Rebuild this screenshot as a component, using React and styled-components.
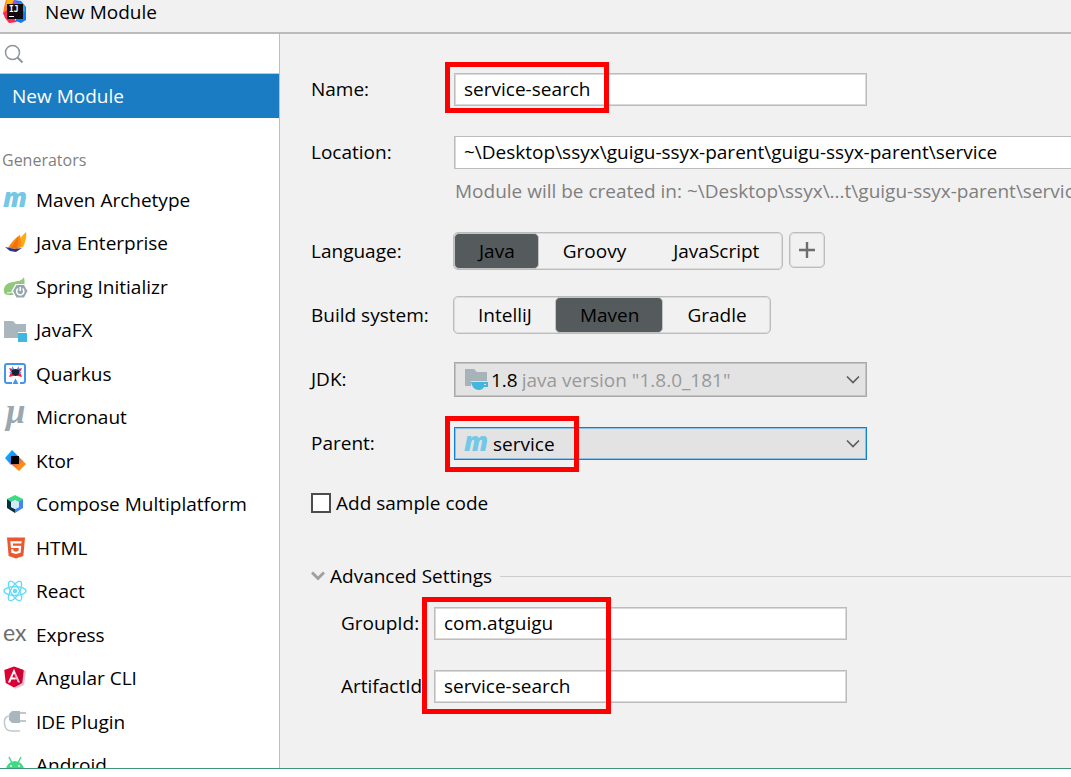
import React, { useState } from 'react';
import styled, { createGlobalStyle } from 'styled-components';
import { FaAngular, FaHtml5 } from 'react-icons/fa';

const GlobalStyle = createGlobalStyle`
  * {
    box-sizing: border-box;
  }

  body {
    margin: 0;
    background: #ffffff;
    color: #000000;
    font-family: 'Open Sans', 'Noto Sans', sans-serif;
    font-size: 19px;
    line-height: 24px;
  }

  button,
  input,
  select {
    margin: 0;
    font: inherit;
    color: inherit;
  }
`;

const Screen = styled.div`
  height: 100vh;
  padding-bottom: 8px;
`;

const Window = styled.div`
  display: flex;
  flex-direction: column;
  height: 100%;
  overflow: hidden;
  background: #f1f1f1;
  border-bottom: 1px solid #3f9577;
`;

const TitleBar = styled.header`
  display: flex;
  flex: none;
  align-items: flex-start;
  gap: 19px;
  height: 34px;
  padding-left: 2px;
  border-bottom: 2px solid #bcbcbc;
`;

const Title = styled.h1`
  margin: 0;
  font-size: 19px;
  font-weight: 400;
  line-height: 24px;
`;

const Body = styled.div`
  display: flex;
  flex: 1;
  min-height: 0;
`;

const Sidebar = styled.aside`
  flex: 0 0 280px;
  overflow: hidden;
  background: #ffffff;
  border-right: 1px solid #bfbfbf;
`;

const SearchBox = styled.label`
  display: flex;
  align-items: center;
  gap: 8px;
  height: 40px;
  padding: 0 4px;
  border-bottom: 1px solid #c6c6c6;
`;

const SearchInput = styled.input`
  flex: 1;
  min-width: 0;
  padding: 0;
  border: 0;
  outline: 0;
  background: transparent;
`;

const ModuleButton = styled.button`
  display: block;
  width: 100%;
  height: 44px;
  padding: 0 12px;
  border: 0;
  background: #1a7dc4;
  color: #ffffff;
  text-align: left;
`;

const SectionTitle = styled.h2`
  margin: 30px 0 6px;
  padding-left: 2px;
  color: #7f7f7f;
  font-size: 16px;
  font-weight: 400;
  line-height: 24px;
`;

const GeneratorList = styled.ul`
  margin: 0;
  padding: 0;
  list-style: none;
`;

const GeneratorItem = styled.li`
  height: 43px;

  &:nth-child(even) {
    height: 44px;
  }
`;

const GeneratorButton = styled.button`
  display: flex;
  align-items: center;
  gap: 9px;
  width: 100%;
  height: 100%;
  padding: 0 3px;
  border: 0;
  background: transparent;
  text-align: left;
`;

const IconBox = styled.span`
  display: flex;
  flex: none;
  width: 24px;
  height: 24px;

  svg {
    display: block;
    width: 24px;
    height: 24px;
    overflow: visible;
  }
`;

const Form = styled.form`
  flex: 1;
  min-width: 0;
  padding: 39px 0 0 31px;
  overflow: hidden;
`;

const Row = styled.div`
  display: flex;
  align-items: center;
  margin-top: ${({ $gap }) => $gap || 0}px;
`;

const Label = styled.label`
  flex: 0 0 ${({ $width }) => $width || 143}px;
  padding-bottom: 1px;
  white-space: nowrap;
`;

const Field = styled.div`
  position: relative;
  flex: 1;
  min-width: 0;
  max-width: ${({ $wide }) => ($wide ? 'none' : '413px')};
`;

const TextInput = styled.input`
  display: block;
  width: 100%;
  height: 33px;
  padding: 0 9px 1px;
  border: 1px solid #bdbdbd;
  border-right-width: ${({ $open }) => ($open ? 0 : '1px')};
  border-radius: 0;
  outline: 0;
  background: #ffffff;
  box-shadow: inset ${({ $open }) => ($open ? '1px' : 0)} 0 0 ${({ $open }) => ($open ? 0 : '1px')} #d9d9d9;
`;

const Hint = styled.p`
  margin: 10px 0 0 144px;
  overflow: hidden;
  color: #7f7f7f;
  white-space: nowrap;
`;

const Segments = styled.div`
  display: flex;
  height: 38px;
  border: 1px solid #bcbcbc;
  border-radius: 5px;
  box-shadow: inset 0 0 0 1px #dcdcdc;
`;

const Segment = styled.button`
  padding: 0 23px 0 24px;
  border: ${({ $active }) => ($active ? '1px solid #c4c4c4' : 0)};
  border-radius: 5px;
  background: ${({ $active }) => ($active ? '#555a5c' : 'transparent')};
`;

const AddButton = styled.button`
  display: flex;
  align-items: center;
  justify-content: center;
  width: 36px;
  height: 36px;
  margin: 0 0 2px 6px;
  padding: 0;
  border: 1px solid #bcbcbc;
  border-radius: 5px;
  background: transparent;
  box-shadow: inset 0 0 0 1px #dcdcdc;
`;

const Combo = styled.div`
  display: flex;
  align-items: center;
  height: ${({ $focused }) => ($focused ? 33 : 35)}px;
  padding: 0 6px 0 9px;
  border: 1px solid ${({ $focused }) => ($focused ? '#0f80d8' : '#a9a9a9')};
  background: #e3e3e3;
  box-shadow: inset 0 0 0 1px ${({ $focused }) => ($focused ? '#8fc0e6' : '#c2c2c2')};
`;

const ComboPrefix = styled.span`
  margin: 0 4px 0 3px;
`;

const Select = styled.select`
  flex: 1;
  min-width: 0;
  padding: 0;
  border: 0;
  outline: 0;
  appearance: none;
  background: transparent;
  color: ${({ $muted }) => ($muted ? '#999999' : '#000000')};
  margin-left: ${({ $muted }) => ($muted ? 0 : '5px')};
`;

const Highlight = styled.div`
  position: absolute;
  top: ${({ $top }) => $top}px;
  left: ${({ $left }) => $left}px;
  width: ${({ $width }) => $width}px;
  height: ${({ $height }) => $height}px;
  border: 5px solid #ff0000;
  pointer-events: none;
`;

const CheckLabel = styled.label`
  display: flex;
  align-items: center;
  gap: 5px;
`;

const Checkbox = styled.input`
  width: 20px;
  height: 20px;
  appearance: none;
  border: 2px solid #4d4d4d;
  background: #ffffff;

  &:checked {
    background: #1a7dc4;
  }
`;

const AdvancedToggle = styled.button`
  display: flex;
  align-items: center;
  gap: 5px;
  width: 100%;
  margin-top: 49px;
  padding: 0;
  border: 0;
  background: transparent;

  &::after {
    content: '';
    flex: 1;
    height: 1px;
    margin-left: 3px;
    background: #cccccc;
  }
`;

const AdvancedPanel = styled.div`
  position: relative;
  padding: 19px 0 0 30px;
`;

const MavenIcon = () => (
  <svg viewBox="0 0 24 24" aria-hidden="true">
    <text x="0" y="19" fontFamily="Open Sans, sans-serif" fontSize="26" fontWeight="800" fontStyle="italic" fill="#72c8e6">m</text>
  </svg>
);

const JavaEnterpriseIcon = () => (
  <svg viewBox="0 0 24 24" aria-hidden="true">
    <path d="M23 1C18 5 14 12 13 18l7-2c2-4 4-10 3-15z" fill="#fcac10" />
    <path d="M17 4C12 7 8 12 5 17l9 1 4-3c0-4 0-8-1-11z" fill="#f78b15" />
    <path d="M15 6L8 17l6 1c1-4 1-8 1-12z" fill="#f86f09" />
    <path d="M2 16l10 2 7-1-6 4-6-1z" fill="#27348b" />
  </svg>
);

const SpringIcon = () => (
  <svg viewBox="0 0 24 24" aria-hidden="true">
    <path d="M21 2c-2 4-6 4-11 5-7 1-10 5-9 10 1 3 3 3 5 3h8c6 0 9-9 7-18z" fill="#8fc97a" />
    <path d="M4 18c5 0 9-3 12-7" stroke="#ffffff" fill="none" />
    <path d="M12.500 9h9l4 7-4 7.500h-9L8.500 16z" fill="#ffffff" />
    <path d="M13.500 10h7.500l3.500 6-3.500 6.500h-7.500L10 16z" fill="#98a6af" />
    <path d="M15 13.500a3.600 3.600 0 1 0 4.500 0M17.200 12v4" stroke="#ffffff" strokeWidth="1.500" fill="none" />
  </svg>
);

const JavaFxIcon = () => (
  <svg viewBox="0 0 24 24" aria-hidden="true">
    <path d="M1 3h9l3 3h10v8h-8v6H1z" fill="#aab6bd" />
    <path d="M15 15h9v9h-9z" fill="#40b6e0" />
  </svg>
);

const QuarkusIcon = () => (
  <svg viewBox="0 0 24 24" aria-hidden="true">
    <path d="M9 21H4a2 2 0 0 1-2-2V4a2 2 0 0 1 2-2h16a2 2 0 0 1 2 2v15a2 2 0 0 1-2 2h-3" fill="none" stroke="#4695eb" strokeWidth="2" />
    <path d="M12.500 16.500l3 5.500h-6z" fill="#4695eb" />
    <path d="M6 6l4 1h5l4-1-2 4 2 5-4-1h-5l-4 1 2-5z" fill="#f5174f" />
    <path d="M9 4l3 4-3 2zM16 4l-3 4 3 2zM6 10l3 0 0 2zM19 10l-3 0 0 2z" fill="#4695eb" />
    <path d="M9 8l3.500-1L16 8v4l-3.500 2L9 12z" fill="#16222c" />
  </svg>
);

const MicronautIcon = () => (
  <svg viewBox="0 0 24 24" aria-hidden="true">
    <text x="3" y="18" fontFamily="Liberation Serif, serif" fontSize="35" fontWeight="700" fontStyle="italic" fill="#9aa7b0">μ</text>
  </svg>
);

const KtorIcon = () => (
  <svg viewBox="0 0 24 24" aria-hidden="true">
    <defs>
      <linearGradient id="ktorBlue" x1="0" y1="0" x2="1" y2="1">
        <stop offset="0.300" stopColor="#08a8ff" />
        <stop offset="1" stopColor="#7b4fd8" />
      </linearGradient>
      <linearGradient id="ktorOrange" x1="0" y1="0" x2="1" y2="1">
        <stop offset="0" stopColor="#8f3fc4" />
        <stop offset="0.600" stopColor="#ff8a14" />
      </linearGradient>
    </defs>
    <path d="M9 1l7 7-8 8-6-7z" fill="url(#ktorBlue)" />
    <path d="M16 8l7 7-7 7-8-7z" fill="url(#ktorOrange)" />
    <path d="M8 7h8v8H8z" fill="#000000" />
  </svg>
);

const ComposeIcon = () => (
  <svg viewBox="0 0 24 24" aria-hidden="true">
    <path d="M12 3l8 4-4 4-4-3-4 3-4-4z" fill="#3ddc84" />
    <path d="M4 7l4 3v5l4 2v4l-8-5z" fill="#073042" />
    <path d="M20 7v9l-8 5v-4l4-2v-5z" fill="#4285f4" />
    <path d="M12 8l4 2v5l-4 2-4-2v-5z" fill="#d4ebf5" />
  </svg>
);

const HtmlIcon = () => (
  <svg viewBox="0 0 24 24" aria-hidden="true">
    <FaHtml5 x="1" y="0" width="22" height="22" color="#e9582e" />
  </svg>
);

const ReactIcon = () => (
  <svg viewBox="0 0 24 24" aria-hidden="true">
    <g fill="none" stroke="#61dafb" strokeWidth="1.300">
      <ellipse cx="12" cy="12" rx="11" ry="4.300" />
      <ellipse cx="12" cy="12" rx="11" ry="4.300" transform="rotate(60 12 12)" />
      <ellipse cx="12" cy="12" rx="11" ry="4.300" transform="rotate(120 12 12)" />
    </g>
    <circle cx="12" cy="12" r="2.200" fill="#61dafb" />
  </svg>
);

const ExpressIcon = () => (
  <svg viewBox="0 0 24 24" aria-hidden="true">
    <text x="0" y="18" fontFamily="Lato, sans-serif" fontSize="23" fill="#6e6e6e">ex</text>
  </svg>
);

const AngularIcon = () => (
  <svg viewBox="0 0 24 24" aria-hidden="true">
    <FaAngular x="-1" y="-1" width="26" height="26" color="#dd0031" />
    <path d="M12 1l11 4-2 14-9 4z" fill="#a00040" opacity="0.250" />
  </svg>
);

const PluginIcon = () => (
  <svg viewBox="0 0 24 24" aria-hidden="true">
    <path d="M9 1h8v12H9l-3-3V4z" fill="#aab6bd" />
    <path d="M17 3h6M17 11h6" stroke="#aab6bd" strokeWidth="1.600" />
    <path d="M7 6C2 6 1 9 1.500 14c.5 5 4 7 7.500 7h8" fill="none" stroke="#c0c9ce" strokeWidth="1.600" />
  </svg>
);

const AndroidIcon = () => (
  <svg viewBox="0 0 24 24" aria-hidden="true">
    <path d="M3 17a9 9 0 0 1 18 0z" fill="#3ddc84" />
    <path d="M6 4l3 6M18 4l-3 6" stroke="#3ddc84" strokeWidth="1.500" />
    <circle cx="8" cy="13" r="1" fill="#ffffff" />
    <circle cx="16" cy="13" r="1" fill="#ffffff" />
  </svg>
);

const JdkIcon = () => (
  <svg viewBox="0 0 24 24" aria-hidden="true">
    <path d="M1 1h9l3 3h10v9H7v5H1z" fill="#a8b2b9" />
    <path d="M7 14h17v5h-4c-1 2-3 3-5 3-4 0-7-3-8-8z" fill="#40b6e0" />
    <path d="M20 16h2v1h-2z" fill="#e3e3e3" />
  </svg>
);

const IdeaLogo = () => (
  <svg viewBox="0 0 24 24" aria-hidden="true">
    <path d="M4 0h8v22l-5 1-2-7-4-2 1-7z" fill="#fc801d" />
    <path d="M1 13l4-3 10 12-8 1-4-5z" fill="#fe2857" />
    <path d="M5 0h8l-7 8-2-3z" fill="#fdb60d" />
    <path d="M12 0l7 1 5 6v13l-5 3-5-2V5z" fill="#087cfa" />
    <path d="M17 2l6 4v6l-5-2z" fill="#21a8f5" />
    <path d="M12 0l5 4-8 2z" fill="#a74de0" />
    <path d="M5 4h16v15H5z" fill="#120a0c" />
    <text x="7" y="12" fontFamily="DejaVu Sans Mono, monospace" fontSize="8" fontWeight="700" fill="#ffffff">IJ</text>
    <path d="M7 16h5v1H7z" fill="#ffffff" />
  </svg>
);

const SearchIcon = () => (
  <svg width="20" height="20" viewBox="0 0 20 20" fill="none" stroke="#8b959c" aria-hidden="true">
    <circle cx="8.500" cy="8.500" r="7" strokeWidth="1.500" />
    <path d="M13.500 13.500l5 5" strokeWidth="2" />
  </svg>
);

const ChevronIcon = () => (
  <svg width="14" height="10" viewBox="0 0 14 10" fill="none" stroke="#5e5e5e" strokeWidth="1.700" aria-hidden="true">
    <path d="M1 1.500l6 6 6-6" />
  </svg>
);

const generators = [
  { name: 'Maven Archetype', Icon: MavenIcon },
  { name: 'Java Enterprise', Icon: JavaEnterpriseIcon },
  { name: 'Spring Initializr', Icon: SpringIcon },
  { name: 'JavaFX', Icon: JavaFxIcon },
  { name: 'Quarkus', Icon: QuarkusIcon },
  { name: 'Micronaut', Icon: MicronautIcon },
  { name: 'Ktor', Icon: KtorIcon },
  { name: 'Compose Multiplatform', Icon: ComposeIcon },
  { name: 'HTML', Icon: HtmlIcon },
  { name: 'React', Icon: ReactIcon },
  { name: 'Express', Icon: ExpressIcon },
  { name: 'Angular CLI', Icon: AngularIcon },
  { name: 'IDE Plugin', Icon: PluginIcon },
  { name: 'Android', Icon: AndroidIcon },
];

const SegmentedControl = ({ id, options, value, onChange }) => (
  <Segments role="group" aria-labelledby={id}>
    {options.map((option) => (
      <Segment
        key={option}
        type="button"
        $active={option === value}
        aria-pressed={option === value}
        onClick={() => onChange(option)}
      >
        {option}
      </Segment>
    ))}
  </Segments>
);

const App = () => {
  const [language, setLanguage] = useState('Java');
  const [buildSystem, setBuildSystem] = useState('Maven');
  const [advancedOpen, setAdvancedOpen] = useState(true);

  return (
    <Screen>
      <GlobalStyle />
      <Window>
        <TitleBar>
          <IconBox>
            <IdeaLogo />
          </IconBox>
          <Title>New Module</Title>
        </TitleBar>

        <Body>
          <Sidebar>
            <SearchBox>
              <SearchIcon />
              <SearchInput type="search" aria-label="Search" />
            </SearchBox>
            <ModuleButton type="button">New Module</ModuleButton>
            <SectionTitle>Generators</SectionTitle>
            <GeneratorList>
              {generators.map(({ name, Icon }) => (
                <GeneratorItem key={name}>
                  <GeneratorButton type="button">
                    <IconBox>
                      <Icon />
                    </IconBox>
                    {name}
                  </GeneratorButton>
                </GeneratorItem>
              ))}
            </GeneratorList>
          </Sidebar>

          <Form onSubmit={(e) => e.preventDefault()}>
            <Row>
              <Label htmlFor="name">Name:</Label>
              <Field>
                <TextInput id="name" defaultValue="service-search" />
                <Highlight $top={-11} $left={-9} $width={164} $height={51} />
              </Field>
            </Row>

            <Row $gap={30}>
              <Label htmlFor="location">Location:</Label>
              <Field $wide>
                <TextInput id="location" $open defaultValue="~\Desktop\ssyx\guigu-ssyx-parent\guigu-ssyx-parent\service" />
              </Field>
            </Row>
            <Hint>Module will be created in: ~\Desktop\ssyx\...t\guigu-ssyx-parent\service</Hint>

            <Row $gap={29}>
              <Label as="span" id="language" $width={142}>Language:</Label>
              <SegmentedControl
                id="language"
                options={['Java', 'Groovy', 'JavaScript']}
                value={language}
                onChange={setLanguage}
              />
              <AddButton type="button" aria-label="Add language">
                <svg width="16" height="16" viewBox="0 0 16 16" stroke="#6e6e6e" strokeWidth="2.400" aria-hidden="true">
                  <path d="M8 0v16M0 8h16" />
                </svg>
              </AddButton>
            </Row>

            <Row $gap={26}>
              <Label as="span" id="build" $width={142}>Build system:</Label>
              <SegmentedControl
                id="build"
                options={['IntelliJ', 'Maven', 'Gradle']}
                value={buildSystem}
                onChange={setBuildSystem}
              />
            </Row>

            <Row $gap={28}>
              <Label htmlFor="jdk">JDK:</Label>
              <Field>
                <Combo>
                  <IconBox>
                    <JdkIcon />
                  </IconBox>
                  <ComboPrefix>1.8</ComboPrefix>
                  <Select id="jdk" $muted>
                    <option>java version "1.8.0_181"</option>
                  </Select>
                  <ChevronIcon />
                </Combo>
              </Field>
            </Row>

            <Row $gap={30}>
              <Label htmlFor="parent">Parent:</Label>
              <Field>
                <Combo $focused>
                  <IconBox>
                    <MavenIcon />
                  </IconBox>
                  <Select id="parent">
                    <option>service</option>
                  </Select>
                  <ChevronIcon />
                </Combo>
                <Highlight $top={-11} $left={-9} $width={134} $height={56} />
              </Field>
            </Row>

            <Row $gap={31}>
              <CheckLabel>
                <Checkbox type="checkbox" />
                Add sample code
              </CheckLabel>
            </Row>

            <AdvancedToggle
              type="button"
              aria-expanded={advancedOpen}
              onClick={() => setAdvancedOpen(!advancedOpen)}
            >
              <svg width="14" height="10" viewBox="0 0 14 10" fill="none" stroke="#a0a0a0" strokeWidth="3" aria-hidden="true">
                <path d="M1 1.500l6 6 6-6" />
              </svg>
              Advanced Settings
            </AdvancedToggle>

            {advancedOpen && (
              <AdvancedPanel>
                <Row>
                  <Label htmlFor="groupId" $width={93}>GroupId:</Label>
                  <Field>
                    <TextInput id="groupId" defaultValue="com.atguigu" />
                  </Field>
                </Row>
                <Row $gap={30}>
                  <Label htmlFor="artifactId" $width={93}>ArtifactId:</Label>
                  <Field>
                    <TextInput id="artifactId" defaultValue="service-search" />
                  </Field>
                </Row>
                <Highlight $top={9} $left={111} $width={189} $height={117} />
              </AdvancedPanel>
            )}
          </Form>
        </Body>
      </Window>
    </Screen>
  );
};

export default App;
